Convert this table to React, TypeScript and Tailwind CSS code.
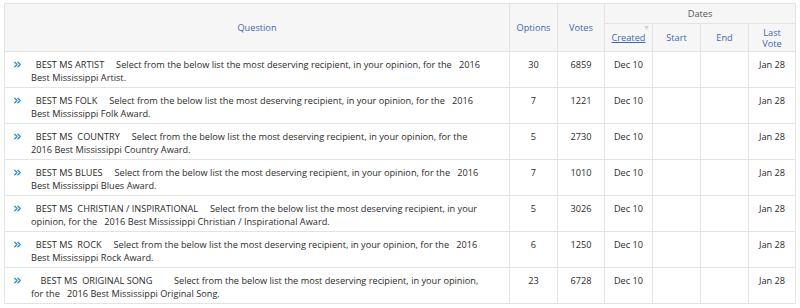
import { ChevronsRight } from "lucide-react";

const nb = (n: number) => "\u00a0".repeat(n);

const rows = [
  {
    title: `${nb(2)}BEST MS ARTIST${nb(4)} `,
    text: `Select from the below list the most deserving recipient, in your opinion, for the${nb(2)} 2016 Best Mississippi Artist.`,
    options: 30,
    votes: 6859,
  },
  {
    title: `${nb(2)}BEST MS FOLK${nb(4)} `,
    text: `Select from the below list the most deserving recipient, in your opinion, for the${nb(2)} 2016 Best Mississippi Folk Award.`,
    options: 7,
    votes: 1221,
  },
  {
    title: `${nb(2)}BEST MS${nb(2)}COUNTRY${nb(4)} `,
    text: `Select from the below list the most deserving recipient, in your opinion, for the${nb(2)} 2016 Best Mississippi Country Award.`,
    options: 5,
    votes: 2730,
  },
  {
    title: `${nb(2)}BEST MS BLUES${nb(4)} `,
    text: `Select from the below list the most deserving recipient, in your opinion, for the${nb(2)} 2016 Best Mississippi Blues Award.`,
    options: 7,
    votes: 1010,
  },
  {
    title: `${nb(2)}BEST MS${nb(2)}CHRISTIAN / INSPIRATIONAL${nb(4)} `,
    text: `Select from the below list the most deserving recipient, in your opinion, for the${nb(2)} 2016 Best Mississippi Christian / Inspirational Award.`,
    options: 5,
    votes: 3026,
  },
  {
    title: `${nb(2)}BEST MS${nb(2)}ROCK${nb(4)} `,
    text: `Select from the below list the most deserving recipient, in your opinion, for the${nb(2)} 2016 Best Mississippi Rock Award.`,
    options: 6,
    votes: 1250,
  },
  {
    title: `${nb(4)}BEST MS${nb(2)}ORIGINAL SONG${nb(8)} `,
    text: `Select from the below list the most deserving recipient, in your opinion, for\u00a0the${nb(3)}2016 Best Mississippi Original Song.`,
    options: 23,
    votes: 6728,
  },
];

const th = "border border-[#e3e3e3] bg-[#f6f6f6] font-normal text-[#3e66b3] text-center align-middle";
const td = "border border-[#e3e3e3] text-center align-top pt-[6px]";

export default function App() {
  return (
    <div
      className="bg-white pt-[3px] pl-[4px] text-[9.2px] leading-[13px] text-[#2b2b2b]"
      style={{ fontFamily: '"Open Sans", "Liberation Sans", sans-serif' }}
    >
      <table className="w-[791px] table-fixed border-collapse">
        <colgroup>
          <col className="w-[505px]" />
          <col className="w-[48px]" />
          <col className="w-[47px]" />
          <col className="w-[48px]" />
          <col className="w-[48px]" />
          <col className="w-[48px]" />
          <col className="w-[47px]" />
        </colgroup>
        <thead>
          <tr className="h-[20px]">
            <th rowSpan={2} className={th}>
              Question
            </th>
            <th rowSpan={2} className={th}>
              Options
            </th>
            <th rowSpan={2} className={th}>
              Votes
            </th>
            <th colSpan={4} className={`${th} text-[#555]`}>
              Dates
            </th>
          </tr>
          <tr className="h-[28px] leading-[11px]">
            <th className={`${th} relative`}>
              <span className="underline">Created</span>
              <span className="absolute right-[2px] top-[1px] text-[7px] leading-[6px] text-[#cfcfcf]">▼</span>
            </th>
            <th className={th}>Start</th>
            <th className={th}>End</th>
            <th className={th}>
              Last
              <br />
              Vote
            </th>
          </tr>
        </thead>
        <tbody>
          {rows.map((r) => (
            <tr key={r.votes} className="h-[36px]">
              <td className="border border-[#e3e3e3] align-top pt-[6px]">
                <div className="flex">
                  <div className="w-[26px] shrink-0 flex justify-center pt-[1px] pr-[1px]">
                    <ChevronsRight size={11} strokeWidth={3} className="text-[#2f8fdc]" />
                  </div>
                  <div className="pr-[26px]">{r.title + r.text}</div>
                </div>
              </td>
              <td className={td}>{r.options}</td>
              <td className={td}>{r.votes}</td>
              <td className={td}>Dec 10</td>
              <td className={td}></td>
              <td className={td}></td>
              <td className={td}>Jan 28</td>
            </tr>
          ))}
        </tbody>
      </table>
    </div>
  );
}
